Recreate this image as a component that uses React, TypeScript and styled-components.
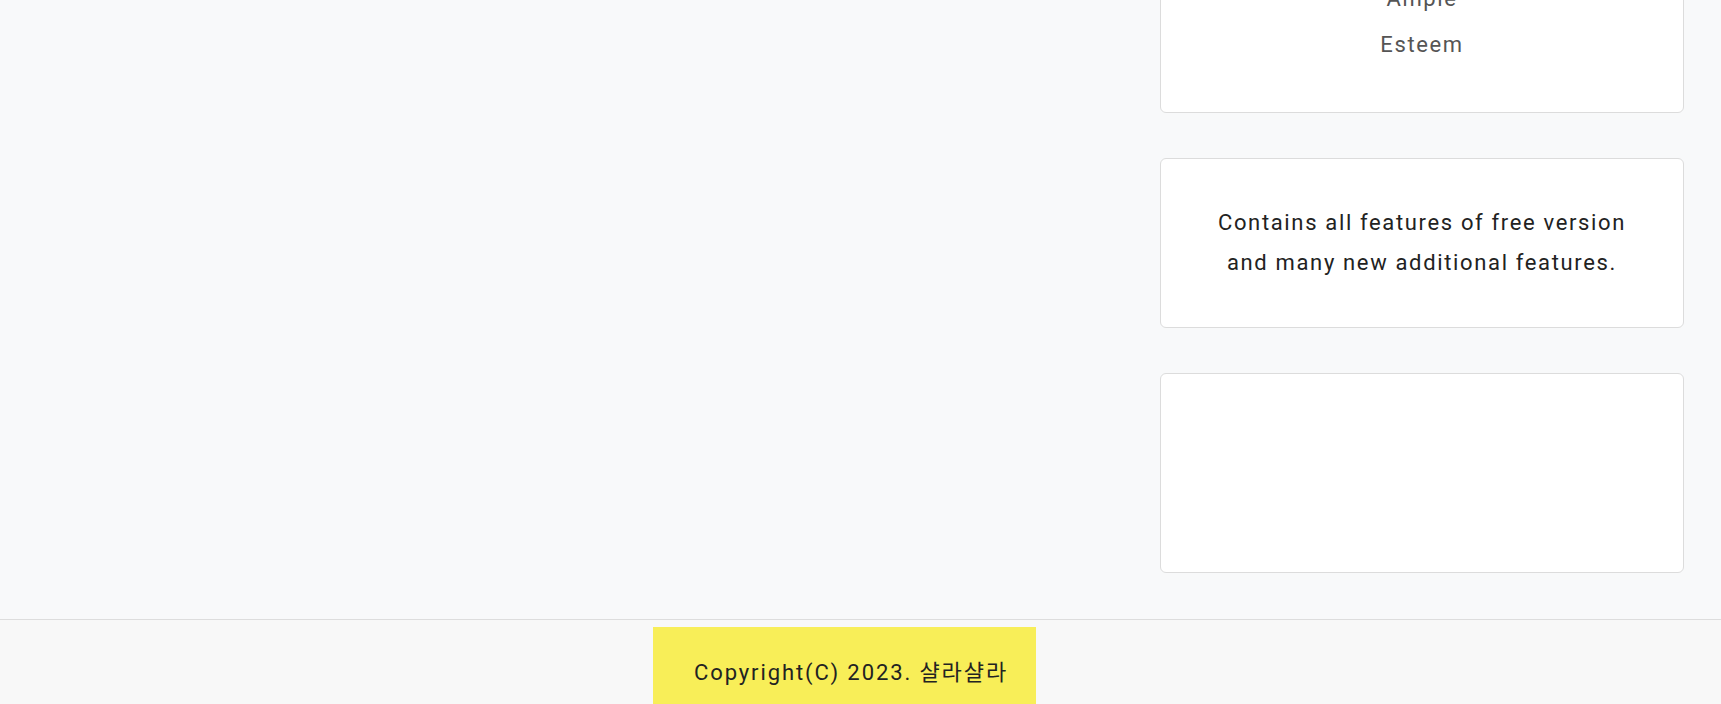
import React from "react";
import styled, { createGlobalStyle } from "styled-components";

const GlobalStyle = createGlobalStyle`
  html, body {
    margin: 0;
    padding: 0;
    background-color: #f8f9fa;
    font-family: Roboto, "Noto Sans CJK KR", sans-serif;
    overflow: hidden;
  }
  * {
    box-sizing: border-box;
  }
`;

const App = () => {
  return (
    <>
      <GlobalStyle />
      <Page>
        <Main>
          <Content />
          <Aside>
            <Card $padding={"44px 20px"}>
              <NameList>
                <NameItem>Ample</NameItem>
                <NameItem>Esteem</NameItem>
              </NameList>
            </Card>
            <Card $padding={"44px 20px"}>
              <Description>
                Contains all features of free version
                <br />
                and many new additional features.
              </Description>
            </Card>
            <Card $height={"200px"} />
          </Aside>
        </Main>
        <Footer>
          <Copyright>Copyright(C) 2023. 샬라샬라</Copyright>
        </Footer>
      </Page>
    </>
  );
};

export default App;

const Page = styled.div`
  /* page is scrolled down; the first card starts above the viewport */
  margin-top: -69px;
`;

const Main = styled.main`
  display: grid;
  grid-template-columns: 1fr 524px;
  padding-right: 37px;
`;

const Content = styled.section``;

const Aside = styled.aside`
  display: flex;
  flex-direction: column;
  gap: 45px;
  padding-bottom: 46px;
`;

const Card = styled.div<{ $padding?: string; $height?: string }>`
  background-color: #ffffff;
  border: 1px solid #dcdcdc;
  border-radius: 6px;
  padding: ${(p) => p.$padding || "0"};
  height: ${(p) => p.$height || "auto"};
  text-align: center;
`;

const NameList = styled.ul`
  list-style: none;
  margin: 0;
  padding: 0;
`;

const NameItem = styled.li`
  font-size: 22px;
  line-height: 46px;
  letter-spacing: 1.6px;
  color: #555555;
`;

const Description = styled.p`
  margin: 0;
  font-size: 22px;
  line-height: 40px;
  letter-spacing: 1.65px;
  color: #222222;
`;

const Footer = styled.footer`
  border-top: 1px solid #dddddd;
  background-color: #f8f8f8;
  padding: 7px 0 0 653px;
  height: 200px;
`;

const Copyright = styled.small`
  display: block;
  width: 383px;
  height: 120px;
  background-color: #f8ee58;
  padding: 31px 0 0 41px;
  font-size: 22px;
  line-height: 30px;
  letter-spacing: 1.9px;
  color: #222222;
`;
